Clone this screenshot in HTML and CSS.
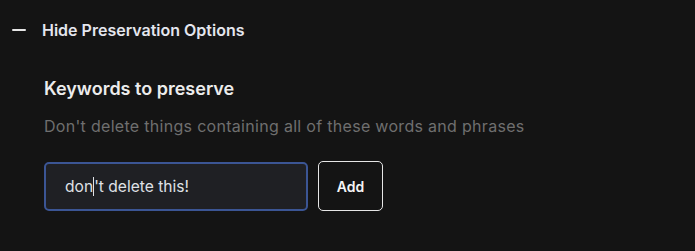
FILE: index.html
```
<!DOCTYPE html>
<html>
<head>
<meta charset="utf-8">
<link rel="stylesheet" href="styles.css">
</head>
<body>
<div class="page">
  <div class="toggle">
    <span class="minus"></span>
    <span class="toggle-label">Hide Preservation Options</span>
  </div>
  <div class="section">
    <div class="heading">Keywords to preserve</div>
    <div class="desc">Don't delete things containing all of these words and phrases</div>
    <div class="row">
      <div class="input">don<span class="caret"></span>'t delete this!</div>
      <div class="btn">Add</div>
    </div>
  </div>
</div>
</body>
</html>
```
FILE: styles.css
```
html, body { margin: 0; padding: 0; background: #141414; }
body { width: 695px; height: 251px; overflow: hidden; font-family: Inter, "Noto Sans", sans-serif; }
.page { padding: 20px 0 0 12px; }
.toggle { display: flex; align-items: center; height: 20px; }
.minus { width: 14px; height: 2px; background: #e6e6e6; border-radius: 1px; }
.toggle-label { margin-left: 16px; color: #e4e6ee; font-size: 16px; font-weight: 600; line-height: 20px; }
.section { padding: 38px 0 0 32px; }
.heading { color: #ececec; font-size: 18px; font-weight: 600; line-height: 22px; }
.desc { margin-top: 16px; color: #6f6f6f; font-size: 16px; letter-spacing: 0.3px; line-height: 20px; }
.row { display: flex; margin-top: 26px; gap: 10px; }
.input { box-sizing: border-box; width: 264px; height: 49px; border: 2px solid #3b5594; border-radius: 5px; background: #1f2024; color: #dfe1e6; font-size: 15.6px; display: flex; align-items: center; padding-left: 19px; }
.caret { display: inline-block; width: 1px; height: 19px; background: #dfe1e6; }
.btn { box-sizing: border-box; width: 65px; height: 50px; margin-top: -1px; border: 1px solid #e6e6e6; border-radius: 5px; color: #f4f4f4; font-size: 14px; font-weight: 600; display: flex; align-items: center; justify-content: center; }
```
